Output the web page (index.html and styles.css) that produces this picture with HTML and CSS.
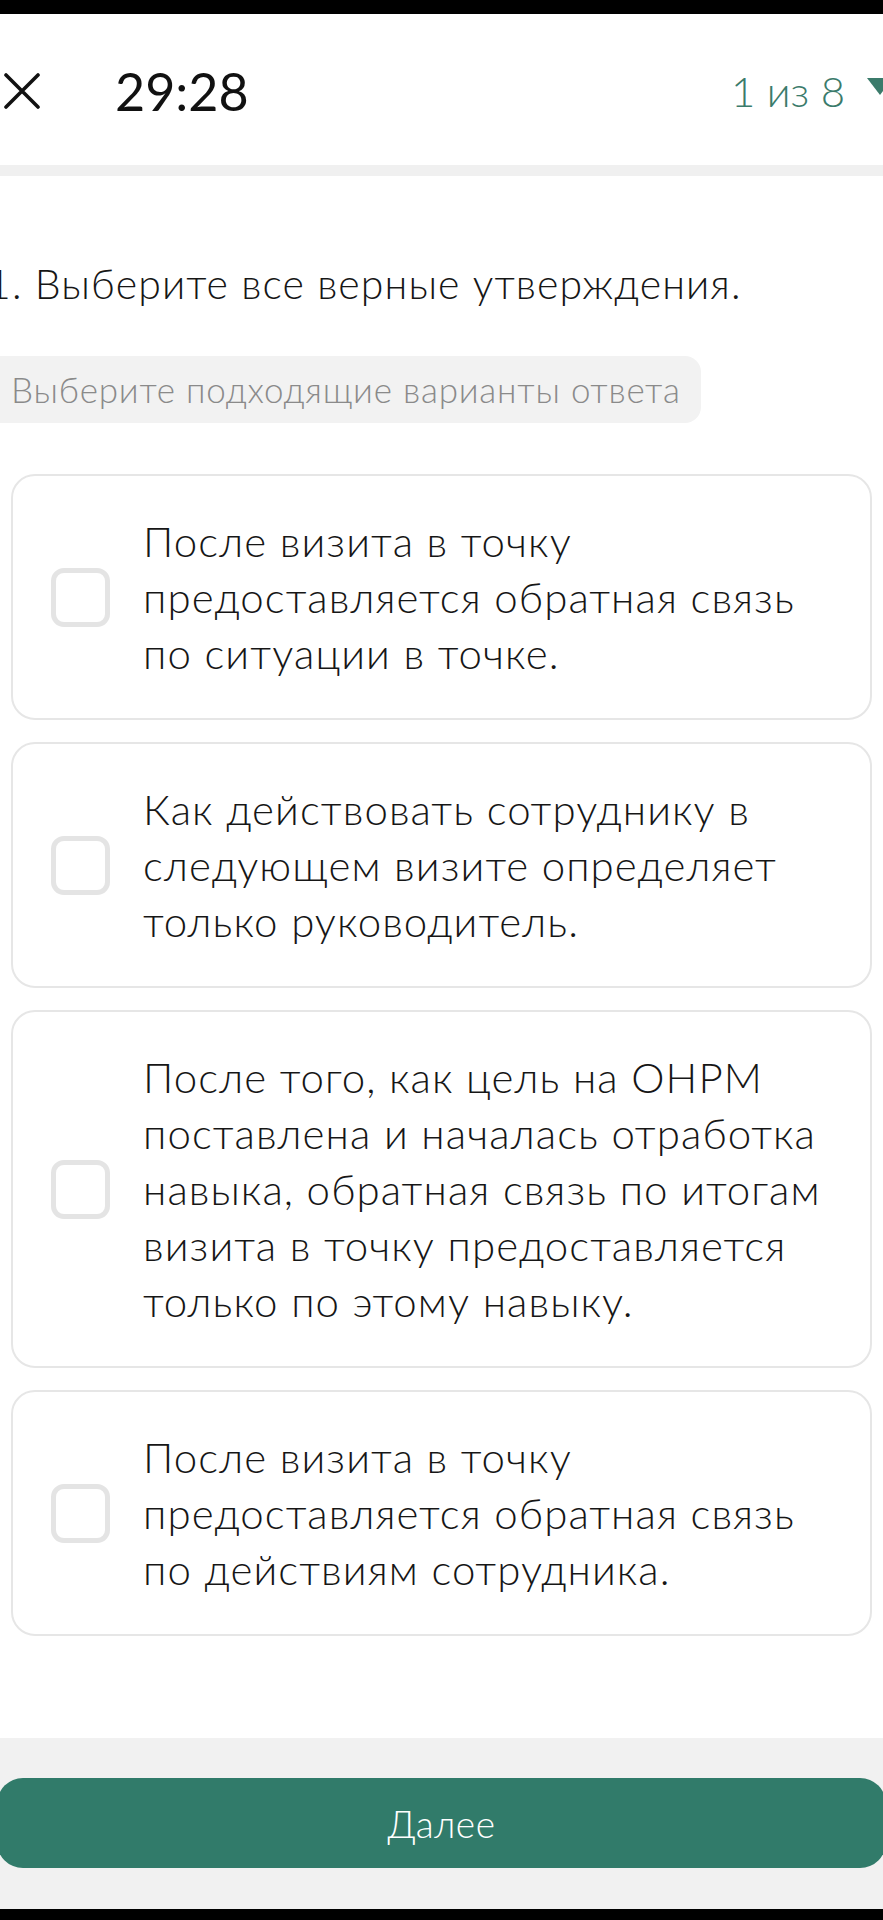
FILE: index.html
```html
<!DOCTYPE html>
<html lang="ru">
<head>
<meta charset="utf-8">
<title>Тест</title>
<link rel="stylesheet" href="styles.css">
</head>
<body>
<div class="screen">
  <div class="status"></div>
  <header class="header">
    <button class="close" aria-label="Закрыть">
      <svg width="36" height="36" viewBox="0 0 36 36"><path d="M2 2 L34 34 M34 2 L2 34" stroke="#111" stroke-width="3.6" stroke-linecap="round" fill="none"/></svg>
    </button>
    <div class="timer">29:28</div>
    <div class="progress">1 из 8 <span class="caret"></span></div>
  </header>
  <div class="band"></div>
  <main class="content">
    <h1 class="question">1. Выберите все верные утверждения.</h1>
    <div class="hint">Выберите подходящие варианты ответа</div>
    <ul class="options">
      <li class="option"><span class="check"></span><p class="label">После визита в точку предоставляется обратная связь по ситуации в точке.</p></li>
      <li class="option"><span class="check"></span><p class="label">Как действовать сотруднику в следующем визите определяет только руководитель.</p></li>
      <li class="option"><span class="check"></span><p class="label">После того, как цель на ОНРМ поставлена и началась отработка навыка, обратная связь по итогам визита в точку предоставляется только по этому навыку.</p></li>
      <li class="option"><span class="check"></span><p class="label">После визита в точку предоставляется обратная связь по действиям сотрудника.</p></li>
    </ul>
  </main>
  <footer class="footer">
    <button class="next">Далее</button>
  </footer>
  <div class="status bottom"></div>
</div>
</body>
</html>
```

FILE: styles.css
```css
* { box-sizing: border-box; }
html, body { margin: 0; padding: 0; }
body {
  background: #fff;
  font-family: "Lato", "Inter", "Noto Sans", sans-serif;
  font-weight: 300;
  color: #161616;
  overflow: hidden;
}
.screen {
  width: 883px;
  height: 1920px;
  display: flex;
  flex-direction: column;
  overflow: hidden;
}
.status { height: 14px; background: #000; flex: none; }
.status.bottom { height: 11px; }
.header {
  height: 151px;
  flex: none;
  display: flex;
  align-items: center;
  padding-left: 4px;
  padding-top: 2px;
}
.close {
  border: 0; background: none; padding: 0; margin: 0;
  width: 36px; height: 36px; display: flex;
}
.timer {
  margin-left: 75px;
  font-size: 52px;
  font-weight: 400;
  color: #111;
  letter-spacing: 0;
}
.progress {
  margin-left: auto;
  margin-right: -10px;
  font-size: 42px;
  color: #3b7b6b;
  display: flex;
  align-items: center;
  gap: 22px;
  white-space: nowrap;
}
.caret {
  width: 0; height: 0;
  border-left: 13px solid transparent;
  border-right: 13px solid transparent;
  border-top: 17px solid #3b7b6b;
  margin-top: -8px;
}
.band { height: 11px; background: #f0f0f0; flex: none; }
.content {
  flex: 1;
  padding-top: 84px;
}
.question {
  margin: 0 0 0 -13px;
  font-size: 41px;
  line-height: 48px;
  font-weight: 300;
  letter-spacing: 1.1px;
  color: #161616;
}
.hint {
  display: inline-block;
  margin: 48px 0 0 -20px;
  padding: 0 20px 0 31px;
  height: 67px;
  line-height: 67px;
  border-radius: 16px;
  background: #f2f2f2;
  color: #8a8a8a;
  font-size: 35px;
  letter-spacing: 0.8px;
}
.options {
  list-style: none;
  margin: 51px 11px 0;
  padding: 0;
  display: flex;
  flex-direction: column;
  gap: 22px;
}
.option {
  display: flex;
  align-items: center;
  border: 2px solid #e6e6e6;
  border-radius: 24px;
  padding: 37px 36px 37px 38px;
}
.check {
  flex: none;
  width: 59px;
  height: 59px;
  border: 5px solid #e4e4e4;
  border-radius: 13px;
}
.label {
  margin: 0 0 0 33px;
  font-size: 42px;
  line-height: 56px;
  letter-spacing: 1.1px;
  color: #161616;
}
.footer {
  flex: none;
  background: #f1f1f1;
  padding: 40px 0 41px;
}
.next {
  display: block;
  width: 889px;
  height: 90px;
  margin: 0 -3px;
  border: 0;
  border-radius: 26px;
  background: #317b6a;
  color: #fff;
  font-family: "Lato", "Inter", "Noto Sans", sans-serif;
  font-weight: 300;
  font-size: 37px;
  letter-spacing: 0.5px;
}
```
